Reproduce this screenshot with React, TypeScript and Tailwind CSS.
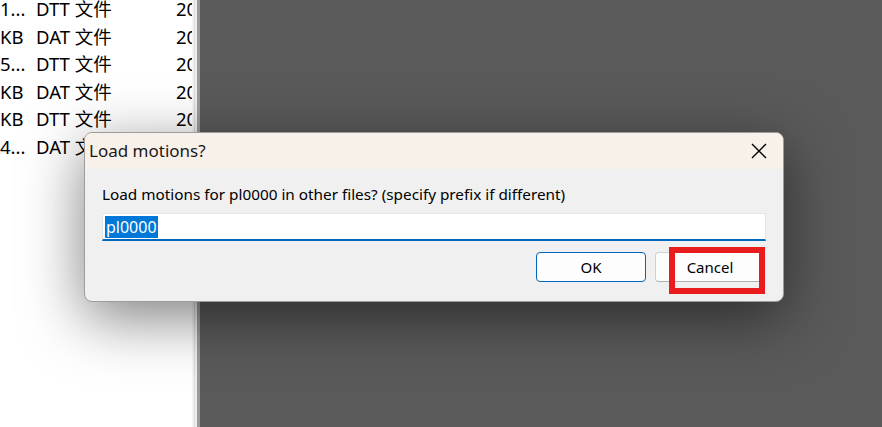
import React from "react";

const rows = [
  ["1...", "DTT 文件"],
  ["KB", "DAT 文件"],
  ["5...", "DTT 文件"],
  ["KB", "DAT 文件"],
  ["KB", "DTT 文件"],
  ["4...", "DAT 文件"],
  ["", ""],
];

const ui = { fontFamily: '"Segoe UI", "Noto Sans", "Noto Sans CJK SC", sans-serif' };

export default function App() {
  return (
    <div className="relative flex h-[427px] w-[882px] overflow-hidden bg-white" style={ui}>
      {/* file list behind the dialog */}
      <div className="w-[192px] overflow-hidden bg-white">
        <div className="-mt-[5px] flex flex-col">
          {rows.map(([size, type], i) => (
            <div key={i} className="flex h-[27.6px] items-center whitespace-nowrap text-[18.5px] text-black">
              <span className="w-[36px] shrink-0">{size}</span>
              <span className="w-[140px] shrink-0">{type}</span>
              {size && <span>2023</span>}
            </div>
          ))}
        </div>
      </div>
      <div className="flex w-[8px] bg-[#e6e6e6]">
        <div className="w-[2px] bg-[#f4f4f4]" />
        <div className="w-[1px] bg-[#d8d8d8]" />
        <div className="w-[2px] bg-[#efefef]" />
        <div className="flex-1 bg-[#9a9a9a]" />
      </div>
      <div className="flex-1 bg-[#5a5a5a]" />

      {/* modal */}
      <div className="absolute left-[84px] top-[132px] flex h-[170px] w-[700px] flex-col overflow-hidden rounded-[8px] border border-[#9c9c9c] bg-[#f0f0f0] shadow-[0_16px_60px_rgba(0,0,0,0.5)]">
        <div className="flex h-[36px] items-center justify-between bg-[#f8f1e9] pl-[4px] pr-[15px]">
          <span className="text-[17px] text-[#1a1a1a]">Load motions?</span>
          <svg width="18" height="18" viewBox="0 0 18 18" className="text-black">
            <path d="M2 2 L16 16 M16 2 L2 16" stroke="currentColor" strokeWidth="1.4" />
          </svg>
        </div>
        <div className="flex flex-1 flex-col px-[17px] pt-[14px]">
          <p className="h-[22px] text-[15.3px] leading-[22px] text-black">
            Load motions for pl0000 in other files? (specify prefix if different)
          </p>
          <div className="mt-[8px] flex h-[28px] items-center border border-b-2 border-[#e5e5e5] border-b-[#0067c0] bg-white pl-[2px]">
            <span className="bg-[#0078d7] px-[1px] text-[16px] leading-[22px] text-white">pl0000</span>
          </div>
          <div className="mt-[11px] flex justify-end gap-[9px] pr-[1px]">
            <button className="h-[30px] w-[110px] rounded-[4px] border border-[#0067c0] bg-[#fdfdfd] text-[15px] text-black">
              OK
            </button>
            <div className="relative">
              <button className="h-[30px] w-[110px] rounded-[4px] border border-[#d0d0d0] border-b-[#b0b0b0] bg-[#fdfdfd] text-[15px] text-black">
                Cancel
              </button>
              <div className="absolute left-[14px] top-[-5px] h-[47px] w-[96px] border-[6px] border-[#e81c1c]" />
            </div>
          </div>
        </div>
      </div>
    </div>
  );
}
